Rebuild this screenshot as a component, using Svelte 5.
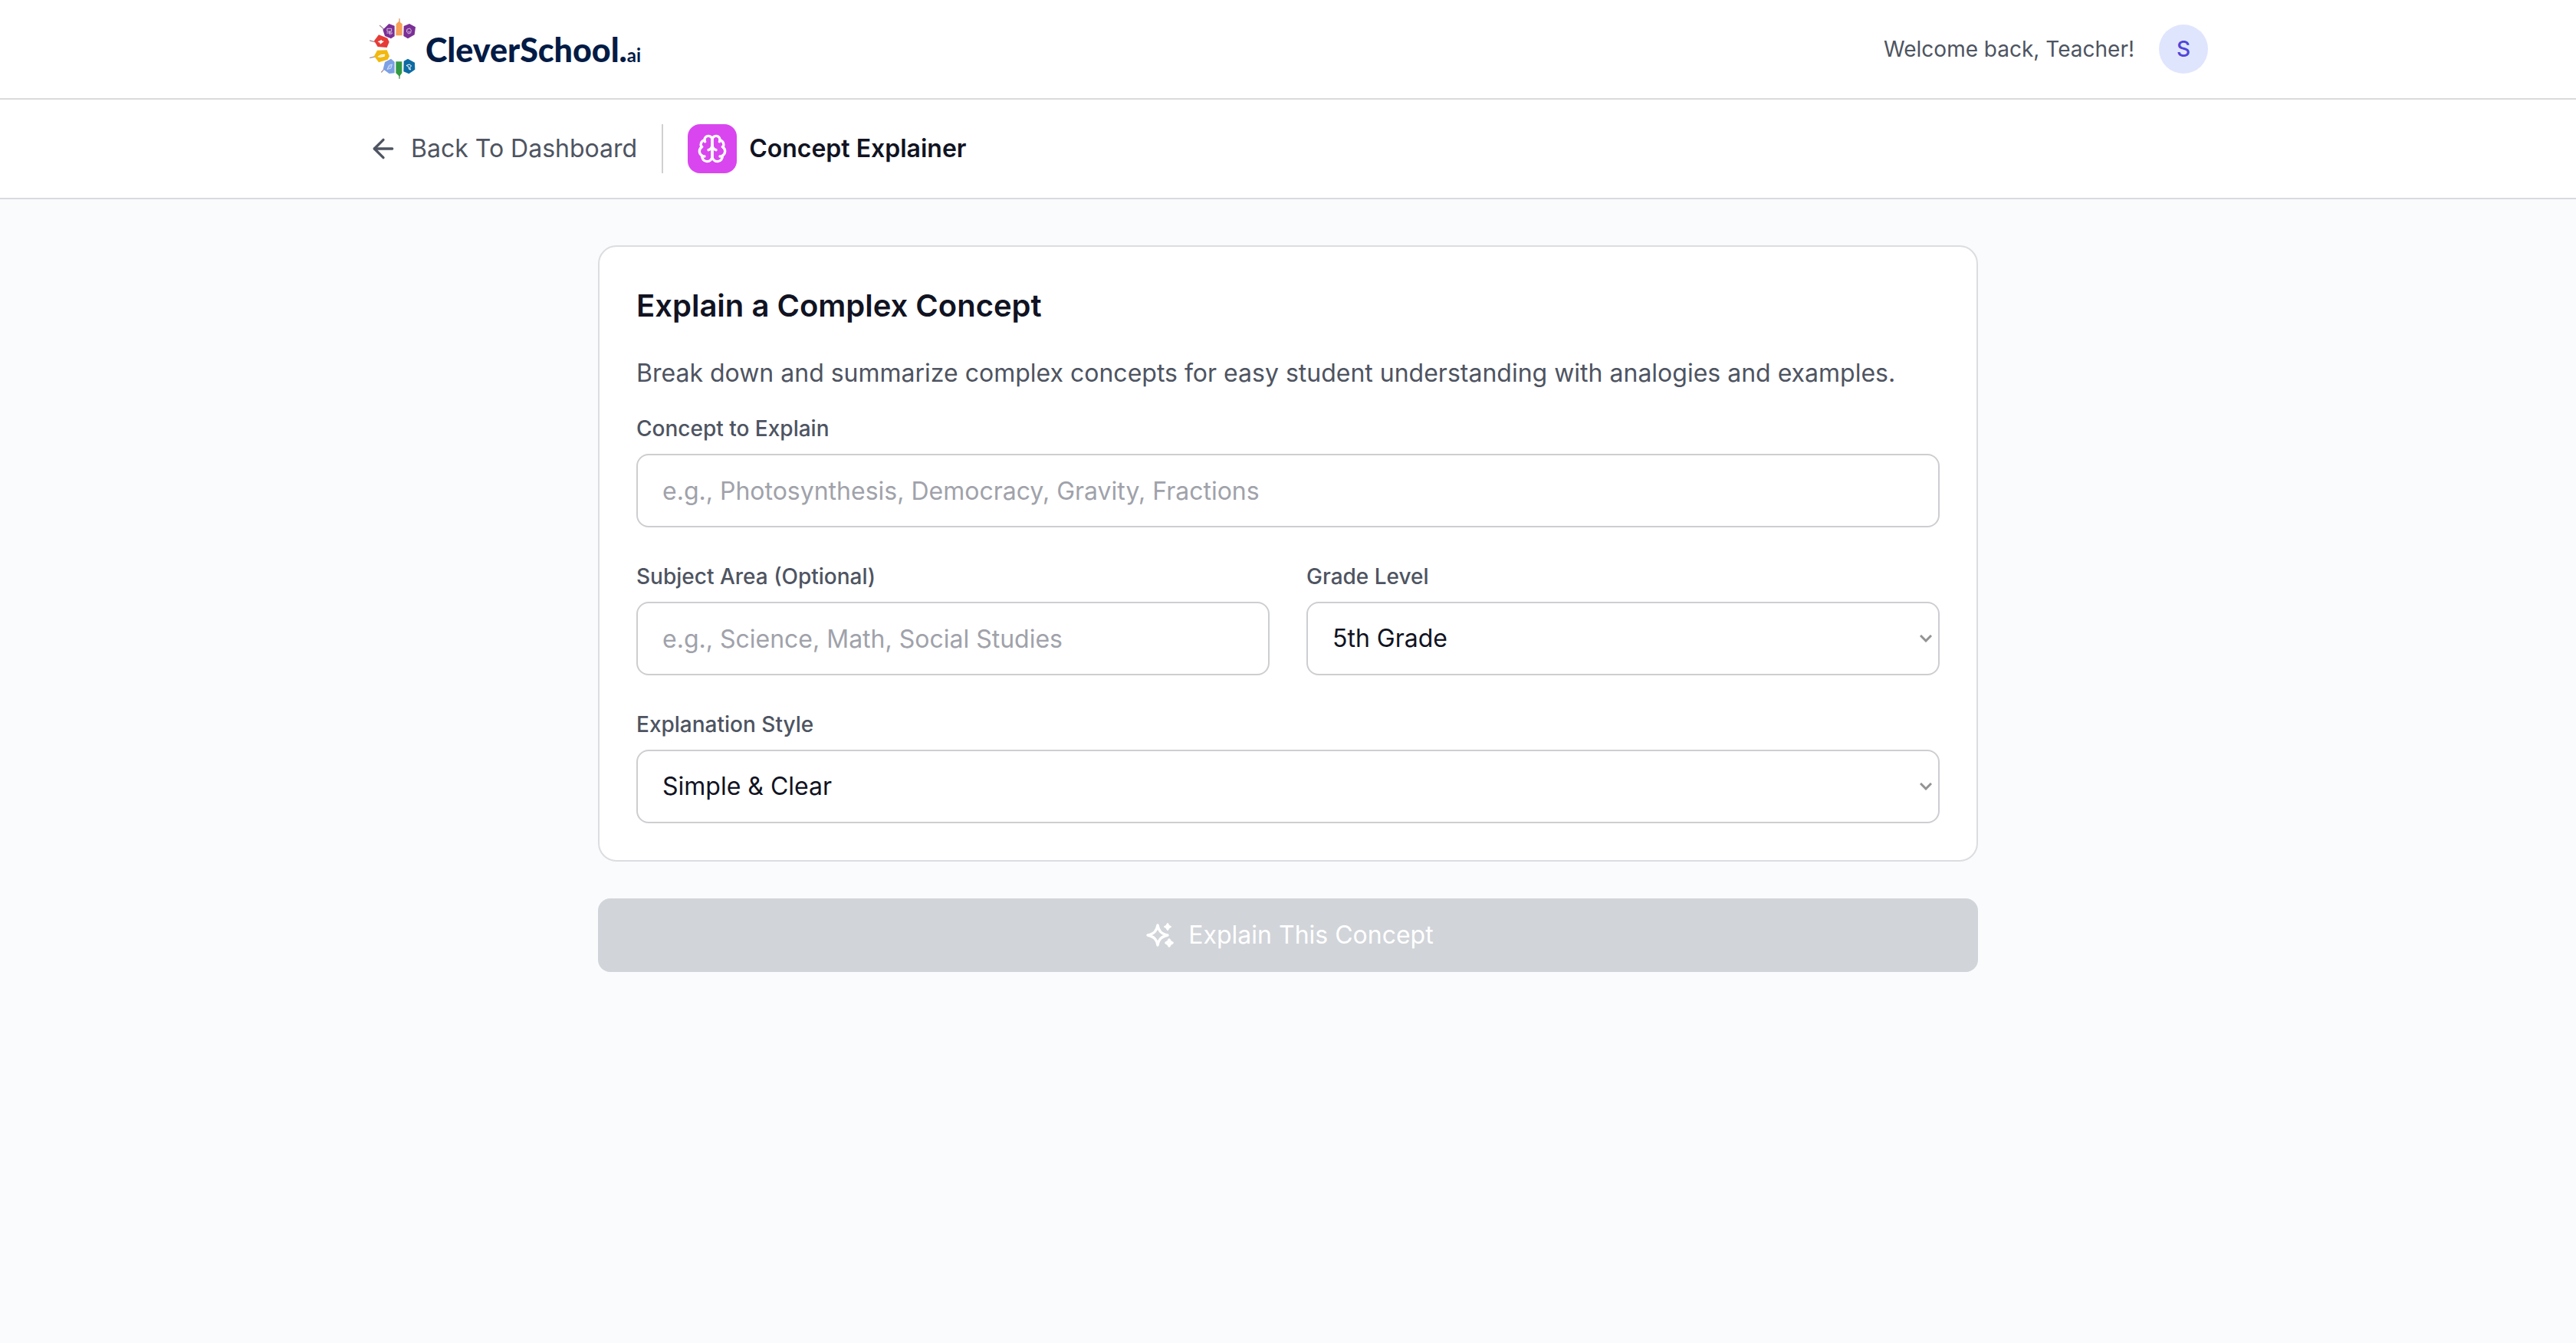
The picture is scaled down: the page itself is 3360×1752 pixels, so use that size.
<script>
    let concept = ''
    let subject = ''
    let grade = '5th Grade'
    let style = 'Simple & Clear'

    const grades = ['3rd Grade', '4th Grade', '5th Grade', '6th Grade', '7th Grade', '8th Grade']
    const styles = ['Simple & Clear', 'With Analogies', 'Step by Step', 'Story Based']

    $:canSubmit = concept.trim().length > 0
</script>

<div class="page">
    <header class="bar">
        <div class="inner">
            <a class="logo" href="/">
                <svg class="mark" viewBox="30 36 195 252" aria-hidden="true">
                    <g stroke="#a9929b" stroke-width="4" stroke-linecap="round">
                        <path d="M76 70 L92 84M38 129 L56 134M38 196 L56 192M83 252 L92 242" />
                        <path d="M153 44 V58" stroke="#d99a63" />
                        <path d="M153 264 V277" stroke="#4c8a54" />
                    </g>
                    <path fill="#7b2f96" d="M112 63 L134 71 V112 L120 121 L96 111 L88 86Z" />
                    <path fill="#7b2f96" d="M170 72 L192 63 L216 76 L212 106 L186 121 L169 111Z" />
                    <path fill="#f7a057" d="M140 64 L151 53 L164 64 V109 H139Z" />
                    <path fill="#e63b36" d="M72 106 L106 119 L113 134 L104 156 L68 153 L54 130Z" />
                    <path fill="#f2b80f" d="M66 167 L104 166 L114 190 L107 203 L72 214 L54 190Z" />
                    <path fill="#7ba0e4" d="M120 200 L134 212 V256 L113 258 L89 241 L96 213Z" />
                    <path fill="#339a44" d="M139 211 H163 V256 L153 269 L139 256Z" />
                    <path fill="#0d6ba3" d="M170 209 L186 200 L213 215 L214 242 L190 259 L169 250Z" />
                    <g fill="none" stroke="#fff" stroke-width="2" stroke-linejoin="round" stroke-linecap="round">
                        <path d="M106 82 H122 V93 H106Z M104 99 H125 M115 93 V105 M119 105 L123 101" />
                        <path d="M184 84 L194 81 L199 88 L197 99 L188 102 L182 95Z M186 92 L190 97 L194 94" />
                        <path d="M70 133 L78 130 L82 126 L84 131 L91 132 L84 137 L79 142 L76 136Z" fill="#fff" />
                        <path d="M70 192 L80 186 L95 184 M76 193 L94 189" stroke-width="4" />
                        <path d="M106 240 L112 226 L124 222 L120 236Z M111 235 L119 227" />
                        <path d="M181 226 L192 222 L200 228 L194 233 L196 243 L191 241 L188 231Z" stroke-width="3" />
                    </g>
                </svg>
                <span class="name">CleverSchool.<small>ai</small></span>
            </a>
            <div class="user">
                <span>Welcome back, Teacher!</span>
                <button class="avatar">S</button>
            </div>
        </div>
    </header>

    <nav class="bar">
        <div class="inner tool">
            <a class="back" href="/dashboard">
                <svg class="icon" viewBox="0 0 24 24" aria-hidden="true">
                    <path d="m12 19-7-7 7-7" />
                    <path d="M19 12H5" />
                </svg>
                Back To Dashboard
            </a>
            <div class="title">
                <span class="tile">
                    <svg class="icon" viewBox="0 0 24 24" aria-hidden="true">
                        <path d="M12 5a3 3 0 1 0-5.997.125 4 4 0 0 0-2.526 5.77 4 4 0 0 0 .556 6.588A4 4 0 1 0 12 18Z" />
                        <path d="M12 5a3 3 0 1 1 5.997.125 4 4 0 0 1 2.526 5.77 4 4 0 0 1-.556 6.588A4 4 0 1 1 12 18Z" />
                        <path d="M15 13a4.5 4.5 0 0 1-3-4 4.5 4.5 0 0 1-3 4" />
                        <path d="M17.599 6.5a3 3 0 0 0 .399-1.375" />
                        <path d="M6.003 5.125A3 3 0 0 0 6.401 6.5" />
                        <path d="M3.477 10.896a4 4 0 0 1 .585-.396" />
                        <path d="M19.938 10.5a4 4 0 0 1 .585.396" />
                        <path d="M6 18a4 4 0 0 1-1.967-.516" />
                        <path d="M19.967 17.484A4 4 0 0 1 18 18" />
                    </svg>
                </span>
                Concept Explainer
            </div>
        </div>
    </nav>

    <main>
        <form on:submit|preventDefault>
            <section class="card">
                <h1>Explain a Complex Concept</h1>
                <p>Break down and summarize complex concepts for easy student understanding with analogies and examples.</p>
                <div class="fields">
                    <div class="field wide">
                        <label for="concept">Concept to Explain</label>
                        <input id="concept" type="text" placeholder="e.g., Photosynthesis, Democracy, Gravity, Fractions" bind:value={concept}>
                    </div>
                    <div class="field">
                        <label for="subject">Subject Area (Optional)</label>
                        <input id="subject" type="text" placeholder="e.g., Science, Math, Social Studies" bind:value={subject}>
                    </div>
                    <div class="field">
                        <label for="grade">Grade Level</label>
                        <select id="grade" bind:value={grade}>
                            {#each grades as g}
                                <option value={g}>{g}</option>
                            {/each}
                        </select>
                    </div>
                    <div class="field wide">
                        <label for="style">Explanation Style</label>
                        <select id="style" bind:value={style}>
                            {#each styles as s}
                                <option value={s}>{s}</option>
                            {/each}
                        </select>
                    </div>
                </div>
            </section>
            <button class="submit" disabled={!canSubmit}>
                <svg class="icon sparkles" viewBox="0 0 40 40" aria-hidden="true">
                    <path d="M20 7 C21.5 14.5 24.5 18 33 20 C24.5 22 21.5 25.5 20 33 C18.5 25.5 15.5 22 7 20 C15.5 18 18.5 14.5 20 7Z" />
                    <path fill="currentColor" stroke-width="2" d="M33 5 L34.5 7.5 L37 9 L34.5 10.5 L33 13 L31.5 10.5 L29 9 L31.5 7.5Z" />
                    <path d="M35 26 L36.4 28.6 L39 30 L36.4 31.4 L35 34 L33.6 31.4 L31 30 L33.6 28.6Z" />
                </svg>
                Explain This Concept
            </button>
        </form>
    </main>
</div>

<style>
    :global(body){
        background: #fafbfd;
    }
    .page{
        min-height: 100vh;
        font-family: Inter, "Liberation Sans", sans-serif;
        font-size: 32px;
        line-height: 48px;
        color: #111322;
        background: #fafbfd;
    }
    .bar{
        background: #fff;
        border-bottom: 2px solid #d9dadd;
    }
    .inner{
        box-sizing: border-box;
        max-width: 2400px;
        height: 128px;
        margin: 0 auto;
        display: flex;
        align-items: center;
        justify-content: space-between;
    }
    .inner.tool{
        justify-content: flex-start;
        gap: 32px;
    }
    .logo{
        display: flex;
        align-items: center;
        gap: 10px;
        color: #021b45;
        text-decoration: none;
    }
    .mark{
        width: 65px;
        height: 84px;
    }
    .name{
        padding-top: 8px;
        font-family: Lato, "Open Sans", sans-serif;
        font-size: 43px;
        font-weight: 900;
    }
    .name small{
        font-size: 24px;
        font-weight: 700;
    }
    .user{
        display: flex;
        align-items: center;
        gap: 32px;
        font-size: 28px;
        color: #4e5461;
    }
    .avatar{
        width: 64px;
        height: 64px;
        padding: 0;
        border: none;
        border-radius: 50%;
        background: #e0e5fe;
        color: #4f46d8;
        font: inherit;
        font-weight: 500;
        cursor: pointer;
    }
    .icon{
        width: 40px;
        height: 40px;
        fill: none;
        stroke: currentColor;
        stroke-width: 2;
        stroke-linecap: round;
        stroke-linejoin: round;
    }
    .sparkles{
        overflow: visible;
        stroke-width: 3.4;
    }
    .back{
        display: flex;
        align-items: center;
        gap: 16px;
        color: #4e5461;
        text-decoration: none;
    }
    .title{
        display: flex;
        align-items: center;
        gap: 16px;
        padding-left: 32px;
        border-left: 2px solid #cfd0d3;
        font-weight: 600;
    }
    .tile{
        width: 64px;
        height: 64px;
        display: flex;
        align-items: center;
        justify-content: center;
        border-radius: 16px;
        background: #d946ef;
        color: #fff;
    }
    main{
        max-width: 1800px;
        margin: 0 auto;
        padding: 60px 0;
    }
    .card{
        padding: 48px;
        border: 2px solid #dcdde0;
        border-radius: 24px;
        background: #fff;
    }
    h1{
        margin: 0 0 35px;
        font-size: 40px;
        font-weight: 600;
        line-height: 58px;
    }
    p{
        margin: 0 0 32px;
        color: #4e5461;
    }
    .fields{
        display: grid;
        grid-template-columns: 1fr 1fr;
        gap: 48px;
    }
    .field{
        display: flex;
        flex-direction: column;
        gap: 16px;
    }
    .wide{
        grid-column: 1 / -1;
    }
    label{
        font-size: 28px;
        font-weight: 500;
        line-height: 33px;
        color: #4e5461;
    }
    input, select{
        box-sizing: border-box;
        width: 100%;
        height: 96px;
        padding: 0 32px;
        border: 2px solid #cdced1;
        border-radius: 16px;
        background: #fff;
        color: #111322;
        font: inherit;
    }
    input::placeholder{
        color: #a0a2aa;
        opacity: 1;
    }
    select{
        appearance: none;
        background: #fff url("data:image/svg+xml,%3Csvg xmlns='http://www.w3.org/2000/svg' width='16' height='10' fill='none' stroke='%23939393' stroke-width='3'%3E%3Cpath d='M1 1l7 7 7-7'/%3E%3C/svg%3E") no-repeat right 8px center;
    }
    input:focus, select:focus{
        outline-style: none;
        border-color: #d946ef;
    }
    .submit{
        width: 100%;
        height: 96px;
        margin-top: 48px;
        display: flex;
        align-items: center;
        justify-content: center;
        gap: 20px;
        border: none;
        border-radius: 16px;
        background: #d946ef;
        color: #fff;
        font: inherit;
        cursor: pointer;
    }
    .submit:disabled{
        background: #d1d4d9;
        cursor: not-allowed;
    }
</style>
